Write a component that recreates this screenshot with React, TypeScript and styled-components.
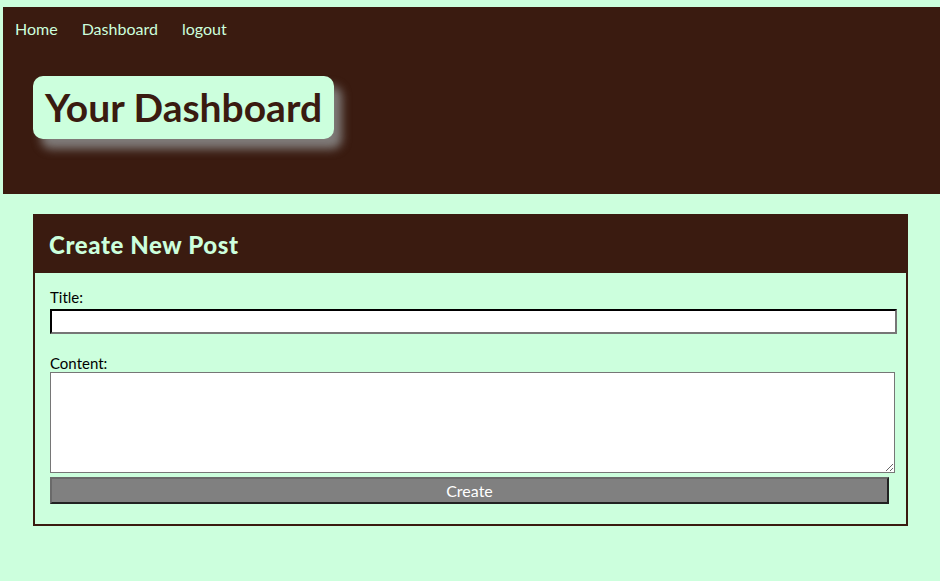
import React from "react";
import styled, { createGlobalStyle } from "styled-components";

const Global = createGlobalStyle`
  html, body { margin: 0; padding: 0; background: #ccffdd; }
  body { font-family: "Lato", "Open Sans", sans-serif; }
`;

const Page = styled.div`
  padding-top: 7px;
  padding-left: 3px;
  min-height: 574px;
`;

const Header = styled.header`
  background: #3a1b10;
  height: 187px;
  box-sizing: border-box;
  padding: 12px 0 0 12px;
`;

const Nav = styled.nav`
  display: flex;
  gap: 24px;
`;

const NavLink = styled.a`
  color: #ccffdd;
  font-size: 16px;
  text-decoration: none;
  line-height: 20px;
`;

const TitleBox = styled.div`
  display: inline-block;
  margin: 37px 0 0 18px;
  background: #ccffdd;
  border-radius: 10px;
  padding: 0 12px;
  height: 63px;
  line-height: 63px;
  box-shadow: 8px 10px 10px rgba(140, 140, 140, 0.85);
`;

const BigTitle = styled.h1`
  margin: 0;
  font-size: 39px;
  font-weight: 700;
  color: #3a1b10;
`;

const Card = styled.section`
  margin: 20px 32px 0 30px;
  border: 2px solid #3a1b10;
`;

const CardHeader = styled.div`
  background: #3a1b10;
  height: 57px;
  display: flex;
  align-items: center;
  padding-left: 14px;
`;

const CardTitle = styled.h2`
  margin: 0;
  font-size: 24px;
  font-weight: 900;
  letter-spacing: 0.6px;
  color: #ccffdd;
`;

const Form = styled.form`
  padding: 16px 10px 20px 15px;
  display: flex;
  flex-direction: column;
`;

const Label = styled.label`
  font-size: 15px;
  color: #000;
  line-height: 17px;
`;

const TitleInput = styled.input`
  box-sizing: border-box;
  width: 847px;
  height: 25px;
  margin-top: 3px;
  border: 2px inset #767676;
  border-top-color: #222;
  border-left-color: #222;
  background: #fff;
  margin-bottom: 21px;
`;

const ContentArea = styled.textarea`
  box-sizing: border-box;
  width: 845px;
  height: 101px;
  border: 1px solid #767676;
  background: #fff;
  margin-bottom: 4px;
`;

const Button = styled.button`
  box-sizing: border-box;
  width: 839px;
  height: 27px;
  background: #808080;
  color: #fff;
  font-family: "Lato", "Open Sans", sans-serif;
  font-size: 16px;
  border: 2px solid #222;
  border-top-color: #6a6a6a;
  border-left-color: #6a6a6a;
  padding: 0;
  line-height: 23px;
`;

export default function App() {
  return (
    <>
      <Global />
      <Page>
        <Header>
          <Nav>
            <NavLink href="#">Home</NavLink>
            <NavLink href="#">Dashboard</NavLink>
            <NavLink href="#">logout</NavLink>
          </Nav>
          <TitleBox>
            <BigTitle>Your Dashboard</BigTitle>
          </TitleBox>
        </Header>
        <Card>
          <CardHeader>
            <CardTitle>Create New Post</CardTitle>
          </CardHeader>
          <Form onSubmit={(e) => e.preventDefault()}>
            <Label htmlFor="title">Title:</Label>
            <TitleInput id="title" type="text" />
            <Label htmlFor="content">Content:</Label>
            <ContentArea id="content" />
            <Button type="submit">Create</Button>
          </Form>
        </Card>
      </Page>
    </>
  );
}
